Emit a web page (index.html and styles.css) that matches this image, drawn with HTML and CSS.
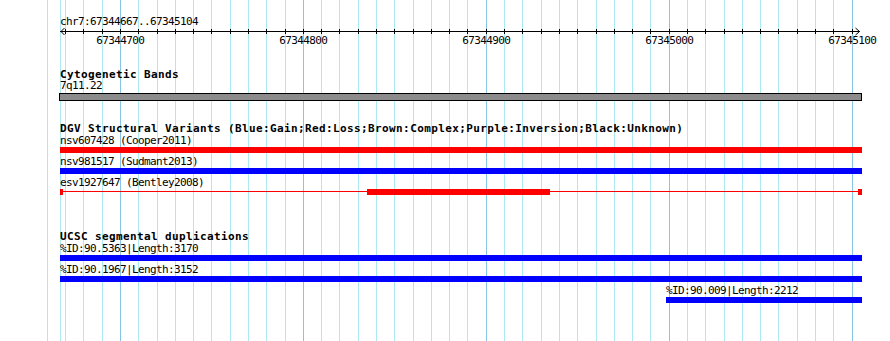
FILE: index.html
```html
<!DOCTYPE html>
<html>
<head>
<meta charset="utf-8">
<link rel="stylesheet" href="styles.css">
</head>
<body>
<div class="browser">
  <svg class="grid" width="890" height="341" viewBox="0 0 890 341">
    <path class="gl" d="M47.5 0V341M60.5 0V341M65.5 0V341M83.5 0V341M102.5 0V341M138.5 0V341M157.5 0V341M175.5 0V341M193.5 0V341M211.5 0V341M230.5 0V341M248.5 0V341M266.5 0V341M285.5 0V341M321.5 0V341M339.5 0V341M358.5 0V341M376.5 0V341M394.5 0V341M413.5 0V341M431.5 0V341M449.5 0V341M467.5 0V341M504.5 0V341M522.5 0V341M541.5 0V341M559.5 0V341M577.5 0V341M596.5 0V341M614.5 0V341M632.5 0V341M650.5 0V341M687.5 0V341M705.5 0V341M724.5 0V341M742.5 0V341M760.5 0V341M778.5 0V341M797.5 0V341M815.5 0V341M833.5 0V341"/>
    <path class="gd" d="M120.5 0V341M303.5 0V341M486.5 0V341M669.5 0V341M852.5 0V341"/>
  </svg>

  <svg class="ruler" width="890" height="50" viewBox="0 0 890 50">
    <text x="60" y="25">chr7:67344667..67345104</text>
    <path class="axis" d="M60 31.5H860"/>
    <path class="axis" d="M64.5 28L61 31.5L64.5 35M855.5 28L859.5 31.5L855.5 35"/>
    <path class="axis" d="M65.5 29V34M83.5 29V34M102.5 29V34M120.5 29V34M138.5 29V34M157.5 29V34M175.5 29V34M193.5 29V34M211.5 29V34M230.5 29V34M248.5 29V34M266.5 29V34M285.5 29V34M303.5 29V34M321.5 29V34M339.5 29V34M358.5 29V34M376.5 29V34M394.5 29V34M413.5 29V34M431.5 29V34M449.5 29V34M467.5 29V34M486.5 29V34M504.5 29V34M522.5 29V34M541.5 29V34M559.5 29V34M577.5 29V34M596.5 29V34M614.5 29V34M632.5 29V34M650.5 29V34M669.5 29V34M687.5 29V34M705.5 29V34M724.5 29V34M742.5 29V34M760.5 29V34M778.5 29V34M797.5 29V34M815.5 29V34M833.5 29V34M852.5 29V34"/>
    <text class="num" x="120.3" y="44">67344700</text>
    <text class="num" x="303.3" y="44">67344800</text>
    <text class="num" x="486.3" y="44">67344900</text>
    <text class="num" x="669.3" y="44">67345000</text>
    <text class="num" x="852.3" y="44">67345100</text>
  </svg>

  <section class="track cyto">
    <div class="title">Cytogenetic Bands</div>
    <div class="label">7q11.22</div>
    <div class="band"></div>
  </section>

  <section class="track dgv">
    <div class="title">DGV Structural Variants (Blue:Gain;Red:Loss;Brown:Complex;Purple:Inversion;Black:Unknown)</div>
    <div class="item">
      <div class="label">nsv607428 (Cooper2011)</div>
      <div class="feat"><span class="block red" style="left:0;width:802px"></span></div>
    </div>
    <div class="item">
      <div class="label">nsv981517 (Sudmant2013)</div>
      <div class="feat"><span class="block blue" style="left:0;width:802px"></span></div>
    </div>
    <div class="item">
      <div class="label">esv1927647 (Bentley2008)</div>
      <div class="feat">
        <span class="thin red" style="left:0;width:802px"></span>
        <span class="block red" style="left:0;width:3px"></span>
        <span class="block red" style="left:307px;width:183px"></span>
        <span class="block red" style="left:798px;width:4px"></span>
      </div>
    </div>
  </section>

  <section class="track ucsc">
    <div class="title">UCSC segmental duplications</div>
    <div class="item">
      <div class="label">%ID:90.5363|Length:3170</div>
      <div class="feat"><span class="block blue" style="left:0;width:802px"></span></div>
    </div>
    <div class="item">
      <div class="label">%ID:90.1967|Length:3152</div>
      <div class="feat"><span class="block blue" style="left:0;width:802px"></span></div>
    </div>
    <div class="item">
      <div class="label" style="margin-left:606px">%ID:90.009|Length:2212</div>
      <div class="feat"><span class="block blue" style="left:606px;width:196px"></span></div>
    </div>
  </section>
</div>
</body>
</html>
```

FILE: styles.css
```css
html, body {
  margin: 0;
  padding: 0;
  background: #ffffff;
}

body {
  font-family: "DejaVu Sans Mono", "Liberation Mono", monospace;
  color: #000;
}

.browser {
  position: relative;
  z-index: 0;
  width: 890px;
  height: 341px;
  overflow: hidden;
}

.grid {
  position: absolute;
  left: 0;
  top: 0;
  z-index: -1;
}

.grid .gl {
  stroke: #acE9f1;
  stroke-width: 1;
  fill: none;
}

.grid .gd {
  stroke: #88c4e6;
  stroke-width: 1;
  fill: none;
}

.ruler {
  display: block;
}

.ruler text {
  font-family: "DejaVu Sans Mono", "Liberation Mono", monospace;
  font-size: 11px;
  letter-spacing: -0.62px;
  fill: #000;
}

.ruler .num {
  text-anchor: middle;
}

.ruler .axis {
  stroke: #000;
  stroke-width: 1;
  fill: none;
}

.track {
  padding-left: 60px;
  width: 802px;
}

.title {
  font-weight: bold;
  font-size: 11px;
  line-height: 11px;
  height: 11px;
  letter-spacing: 0.38px;
  white-space: nowrap;
}

.label {
  font-size: 11px;
  line-height: 11px;
  height: 11px;
  letter-spacing: -0.62px;
  white-space: nowrap;
}

.cyto {
  margin-top: 19px;
}

.band {
  width: 801px;
  height: 6px;
  margin: 2px 0 0 -1px;
  border: 1px solid #000;
  background: #8c8c8c;
}

.dgv {
  margin-top: 22px;
}

.ucsc {
  margin-top: 36px;
}

.item {
  padding-top: 1px;
  margin-bottom: 2px;
}

.feat {
  position: relative;
  height: 6px;
  margin-top: 1px;
}

.block {
  position: absolute;
  top: 0;
  height: 6px;
}

.thin {
  position: absolute;
  top: 2px;
  height: 1px;
}

.red {
  background: #ff0000;
}

.blue {
  background: #0000ff;
}
```
